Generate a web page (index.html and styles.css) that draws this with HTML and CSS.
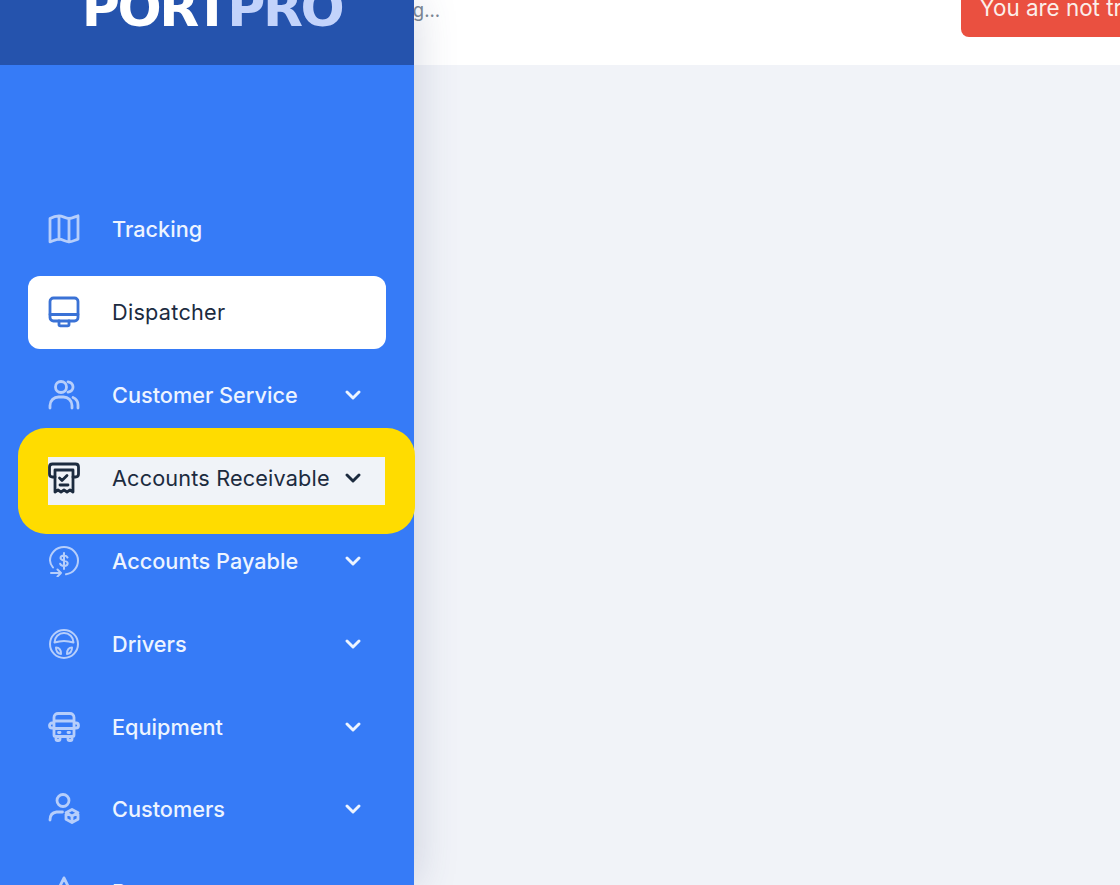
FILE: index.html
```html
<!DOCTYPE html>
<html lang="en">

<head>
    <meta charset="UTF-8">
    <title>PortPro</title>
    <link rel="stylesheet" href="styles.css">
</head>

<body>
    <aside class="sidebar">
        <div class="brand">
            <span class="logo">PORT<span class="logo-pro">PRO</span></span>
        </div>
        <nav class="menu">
            <a class="menu-item" href="#">
                <svg class="menu-icon" viewBox="0 0 32 32"><path d="M2 5.500c3-1.800 6-2.700 9-2.700 3.500 0 6.500 2.700 10 2.700 3 0 6-1.800 9-2.700v23.400c-3 .9-6 2.700-9 2.700-3.500 0-6.500-2.700-10-2.700-3 0-6 1.800-9 2.700zM11 3v23.500M21 5.500v23.500"/></svg>
                <span class="menu-label">Tracking</span>
            </a>
            <a class="menu-item active" href="#">
                <svg class="menu-icon" viewBox="0 0 32 32"><rect x="2" y="2" width="28" height="23" rx="3.500"/><path d="M2 18.500h28M11 25v3.500c0 .8.500 1.300 1.300 1.300h7.400c.8 0 1.300-.5 1.300-1.300V25"/></svg>
                <span class="menu-label">Dispatcher</span>
            </a>
            <a class="menu-item" href="#">
                <svg class="menu-icon" viewBox="0 0 32 32"><circle cx="13" cy="8" r="5.500"/><path d="M2 29v-2.500c0-5 4-8.500 8.500-8.500h5c4.500 0 8.500 3.500 8.500 8.500V29M20 2.800c3 .6 5 2.700 5 5.200s-2 4.600-5 5.200M25 18.500c3 1.200 5 4 5 7.500v3"/></svg>
                <span class="menu-label">Customer Service</span>
                <svg class="chevron" viewBox="0 0 16 16"><path d="M2 5l6 6 6-6"/></svg>
            </a>
            <a class="menu-item marked" href="#">
                <svg class="menu-icon" viewBox="0 0 32 32"><path d="M7 15H4.500C2.800 15 1.500 13.700 1.500 12V5c0-1.700 1.300-3 3-3h23c1.700 0 3 1.300 3 3v7c0 1.700-1.300 3-3 3H25"/><path d="M7 8h18v22l-3-2-3 2-3-2-3 2-3-2-3 2zM11.500 16l2.500 2.500 5-5M12 23h8"/></svg>
                <span class="menu-label">Accounts Receivable</span>
                <svg class="chevron" viewBox="0 0 16 16"><path d="M2 5l6 6 6-6"/></svg>
            </a>
            <a class="menu-item" href="#">
                <svg class="menu-icon thin" viewBox="0 0 32 32"><path d="M5 22.500C3.200 20.200 2 18.200 2 15.500 2 8 8.300 2 16 2s14 6 14 13.500c0 7-5 12.800-12 13.800"/><path d="M19.500 12.500c-.5-1.200-1.800-2-3.500-2-2 0-3.500 1-3.500 2.600 0 3.400 7.200 1.700 7.200 5.200 0 1.500-1.600 2.600-3.700 2.600-1.900 0-3.300-.8-3.800-2.100M16 8v16M3 28h10M9.500 24.500L13 28l-3.500 3.500"/></svg>
                <span class="menu-label">Accounts Payable</span>
                <svg class="chevron" viewBox="0 0 16 16"><path d="M2 5l6 6 6-6"/></svg>
            </a>
            <a class="menu-item" href="#">
                <svg class="menu-icon thin" viewBox="0 0 32 32"><circle cx="16" cy="16" r="14"/><path d="M6.500 14.500a9.500 9.500 0 0 1 19 0c-6-2-13-2-19 0zM8 19.500c3 0 5 2.500 5 6.500-3-.5-5-3-5-6.500zM24 19.500c-3 0-5 2.500-5 6.500 3-.5 5-3 5-6.500z"/></svg>
                <span class="menu-label">Drivers</span>
                <svg class="chevron" viewBox="0 0 16 16"><path d="M2 5l6 6 6-6"/></svg>
            </a>
            <a class="menu-item" href="#">
                <svg class="menu-icon" viewBox="0 0 32 32"><path d="M6 24V6.500C6 4 8 2.500 10 2.500h12c2 0 4 1.500 4 4V24c0 1-.7 1.500-1.500 1.500h-17C6.700 25.500 6 25 6 24zM6 10h20M6 17.500h20M8 25.500V28c0 1 .6 1.500 1.500 1.500h1c.9 0 1.500-.5 1.500-1.500v-2.500M20 25.500V28c0 1 .6 1.500 1.500 1.500h1c.9 0 1.500-.5 1.500-1.500v-2.500M6 12H4c-1.400 0-2.500 1-2.500 2.500S2.600 17 4 17h2M26 12h2c1.400 0 2.500 1 2.500 2.500S29.400 17 28 17h-2M10.500 21.500h1.500M20 21.500h1.500"/></svg>
                <span class="menu-label">Equipment</span>
                <svg class="chevron" viewBox="0 0 16 16"><path d="M2 5l6 6 6-6"/></svg>
            </a>
            <a class="menu-item" href="#">
                <svg class="menu-icon" viewBox="0 0 32 32"><circle cx="15" cy="7.500" r="6"/><path d="M2 27c0-4.500 2.500-7.500 6.500-8h6"/><path d="M24 16.500l6 3.200v6.600l-6 3.200-6-3.200v-6.600zM18 19.700l6 3.300 6-3.300M24 23v6.500"/></svg>
                <span class="menu-label">Customers</span>
                <svg class="chevron" viewBox="0 0 16 16"><path d="M2 5l6 6 6-6"/></svg>
            </a>
            <a class="menu-item" href="#">
                <svg class="menu-icon" viewBox="0 0 32 32"><path d="M16 2L2 30M16 2l14 28M8 20h16"/></svg>
                <span class="menu-label">Reports</span>
            </a>
        </nav>
    </aside>

    <main class="content">
        <header class="topbar">
            <span class="loading">Loading...</span>
            <button class="tracking-btn">You are not tracking</button>
        </header>
    </main>
</body>

</html>
```

FILE: styles.css
```css
html,
body {
    height: 100%;
}

body {
    margin: 0;
    display: flex;
    overflow: hidden;
    background-color: #f1f3f8;
    font-family: Inter, "Liberation Sans", sans-serif;
}

.sidebar {
    position: relative;
    z-index: 2;
    flex: 0 0 414px;
    background-color: #367bf7;
    box-shadow: 0 0 40px rgba(60, 75, 120, 0.22);
}

.brand {
    height: 65px;
    overflow: hidden;
    display: flex;
    align-items: flex-end;
    justify-content: center;
    background-color: #2553ad;
}

.logo {
    margin-bottom: 32px;
    margin-left: 10px;
    font-family: "DejaVu Sans", sans-serif;
    font-size: 52px;
    font-weight: 700;
    line-height: 50px;
    letter-spacing: -2.500px;
    color: #fff;
}

.logo-pro {
    color: #c3d3fb;
}

.menu {
    padding: 128px 28px 0;
}

.menu-item {
    position: relative;
    display: flex;
    align-items: center;
    height: 72.860px;
    margin-bottom: 10px;
    padding: 0 25px 0 20px;
    border-radius: 12px;
    font-size: 21.700px;
    font-weight: 500;
    color: #edf4ff;
    text-decoration: none;
}

.menu-icon {
    flex: none;
    width: 32px;
    height: 32px;
    margin-right: 32px;
    fill: none;
    stroke: #b6cefb;
    stroke-width: 2.800;
    stroke-linecap: round;
    stroke-linejoin: round;
}

.menu-icon.thin {
    stroke-width: 2;
}

.menu-label {
    position: relative;
    flex: 1;
    white-space: nowrap;
}

.chevron {
    position: relative;
    flex: none;
    width: 16px;
    height: 16px;
    fill: none;
    stroke: #edf4ff;
    stroke-width: 2.900;
    stroke-linecap: round;
    stroke-linejoin: round;
}

.active {
    background-color: #fff;
    color: #1c2b3f;
    font-weight: 400;
    letter-spacing: 0.250px;
}

.active .menu-icon {
    stroke: #3a72d6;
}

.marked {
    color: #1c2b3f;
    font-weight: 400;
    letter-spacing: 0.150px;
}

.marked .menu-icon {
    position: relative;
    stroke: #1c2b3f;
}

.marked .chevron {
    stroke: #1c2b3f;
}

/* yellow annotation frame drawn over the row */
.marked::before {
    content: "";
    position: absolute;
    top: -14px;
    right: -29px;
    bottom: -20px;
    left: -10px;
    border: solid #ffdc00;
    border-width: 29px 30px;
    border-radius: 28px;
    background-color: #f0f3f8;
    background-clip: padding-box;
}

.content {
    flex: 1;
    min-width: 0;
}

.topbar {
    height: 65px;
    overflow: hidden;
    display: flex;
    align-items: flex-start;
    background-color: #fff;
}

.loading {
    margin: 0 0 0 -60px;
    font-size: 18.500px;
    line-height: 20px;
    color: #7b8794;
}

.tracking-btn {
    flex: none;
    height: 37px;
    margin: 0 -91px 0 auto;
    padding: 0 19px 21px;
    border: none;
    border-radius: 0 0 0 8px;
    background-color: #ea5040;
    font-family: inherit;
    font-size: 22.400px;
    line-height: 16px;
    color: #fbeee9;
    white-space: nowrap;
}
```
